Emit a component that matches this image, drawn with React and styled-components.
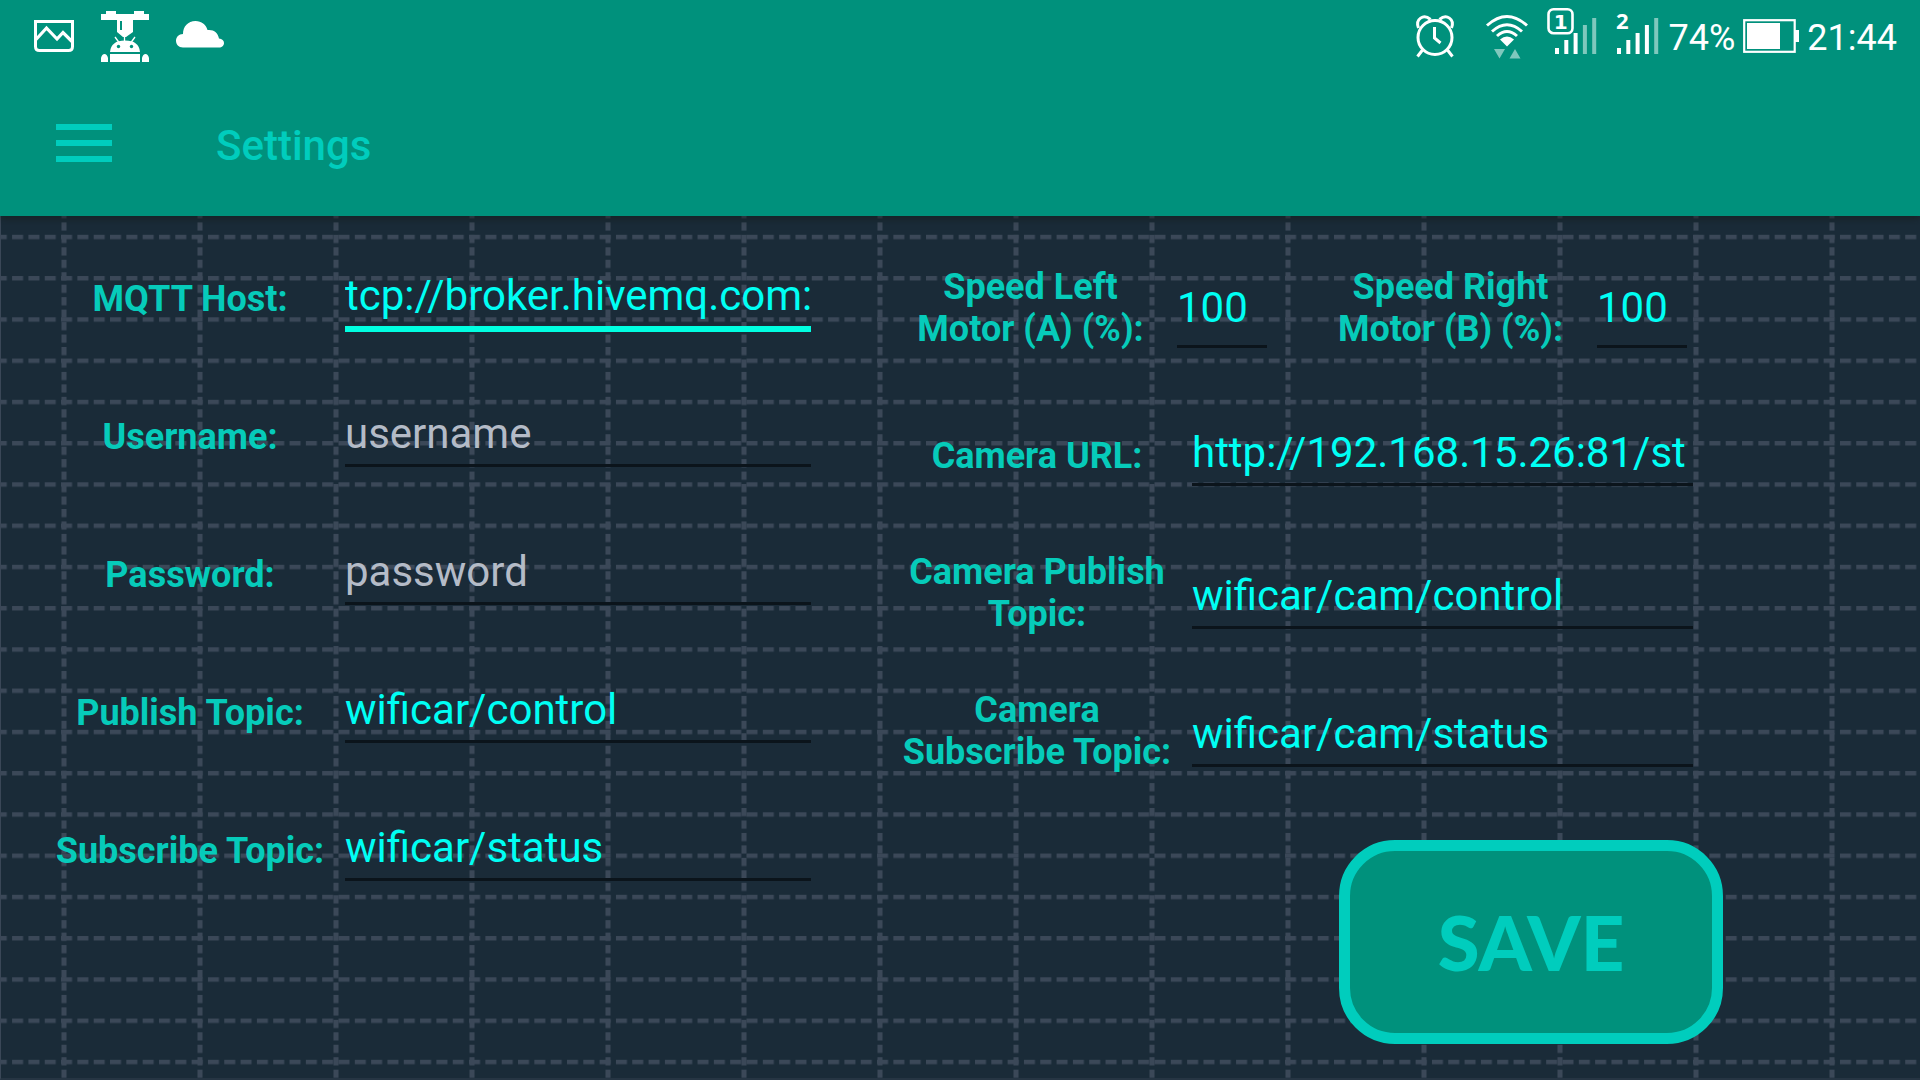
import React from "react";
import styled, { createGlobalStyle, css } from "styled-components";

const color = {
  bar: "#00917c",
  accent: "#00cdbd",
  label: "#06cbba",
  value: "#00fff4",
  hint: "#b4bbc7",
  page: "#1a2b38",
  dash: "#3b4858",
  line: "#0b141b",
};

const GlobalStyle = createGlobalStyle`
  *, *::before, *::after { box-sizing: border-box; }
  body {
    margin: 0;
    background: ${color.page};
    font-family: Roboto, "Noto Sans", sans-serif;
  }
`;

const Screen = styled.div`
  display: flex;
  flex-direction: column;
  min-height: 100vh;
`;

const Header = styled.header`
  position: relative;
  z-index: 1;
  background: ${color.bar};
  box-shadow: 0 2px 8px rgba(16, 24, 16, 0.55);
`;

const StatusBar = styled.div`
  display: flex;
  align-items: center;
  justify-content: space-between;
  height: 72px;
  padding: 0 23px 0 34px;
  color: #fff;
`;

const StatusGroup = styled.div`
  display: flex;
  align-items: center;
  gap: ${(p) => p.$gap}px;

  svg {
    display: block;
    flex: none;
    overflow: visible;
  }
`;

const StatusText = styled.span`
  padding-top: 3px;
  font-size: 36px;
  line-height: 44px;
`;

const Toolbar = styled.div`
  display: flex;
  align-items: center;
  gap: 104px;
  height: 144px;
  padding: 0 56px 2px;
`;

const MenuButton = styled.button`
  display: flex;
  flex-direction: column;
  gap: 10px;
  width: 56px;
  padding: 0;
  border: 0;
  background: none;
`;

const MenuLine = styled.span`
  height: 6px;
  background: ${color.accent};
`;

const Title = styled.h1`
  margin: 0;
  padding-top: 6px;
  color: ${color.accent};
  font-size: 42px;
  font-weight: 500;
  line-height: 50px;
`;

const Body = styled.main`
  position: relative;
  flex: 1;
  border-left: 1px solid #3a4757;
  border-bottom: 2px solid #263543;
`;

const Backdrop = styled.svg`
  position: absolute;
  inset: 0;
  width: 100%;
  height: 100%;
`;

const Form = styled.form`
  position: relative;
  display: grid;
  grid-template-columns: minmax(0, 756fr) minmax(0, 821fr);
  column-gap: 91px;
  align-items: start;
  padding: 14px 197px 0 54px;
`;

const Connection = styled.div`
  display: grid;
  grid-template-columns: minmax(0, 1fr);
  grid-auto-rows: 138px;
`;

const Camera = styled.div`
  display: grid;
  grid-template-columns: minmax(0, 1fr);
  grid-template-rows: 144px 140px 146px 130px auto;
  padding-top: 12px;
`;

const Motors = styled.div`
  display: flex;
  gap: 55px;
`;

const Row = styled.div`
  display: flex;
  align-items: center;
  gap: ${(p) => (p.$compact ? 18 : 20)}px;
  padding-right: ${(p) => (p.$inset ? 30 : 0)}px;
`;

const Label = styled.label`
  flex: none;
  width: ${(p) => (p.$compact ? 257 : 270)}px;
  padding-bottom: ${(p) => (p.$tall ? 12 : 0)}px;
  color: ${color.label};
  font-size: 36px;
  font-weight: 700;
  line-height: 42px;
  text-align: center;
`;

const Input = styled.input`
  flex: ${(p) => (p.$compact ? "none" : "1")};
  width: ${(p) => (p.$compact ? "90px" : "auto")};
  min-width: 0;
  height: ${(p) => (p.$compact ? 68 : 60)}px;
  padding: 2px ${(p) => (p.$inset ? 6 : 0)}px ${(p) => (p.$compact ? 13 : 6)}px 0;
  border: 0;
  border-bottom: 3px solid ${color.line};
  border-radius: 0;
  outline: 0;
  background: none;
  color: ${color.value};
  font-family: inherit;
  font-size: 42px;
  line-height: 50px;

  &::placeholder {
    color: ${color.hint};
    opacity: 1;
  }

  ${(p) =>
    p.$active &&
    css`
      border-color: #00ffe1;
      box-shadow: 0 3px 0 #00ffe1;
    `}
`;

const SaveButton = styled.button`
  justify-self: end;
  width: 384px;
  height: 204px;
  margin-top: 38px;
  border: 11px solid ${color.accent};
  border-radius: 56px;
  background: ${color.bar};
  color: ${color.accent};
  font-family: Lato, sans-serif;
  font-size: 76px;
  font-weight: 900;
  line-height: 80px;
`;

function PictureIcon() {
  return (
    <svg width="40" height="32" viewBox="0 0 40 32" fill="none" stroke="#fff" strokeWidth="3">
      <path d="M1.5 1.5h37v25q0 4-4 4h-29q-4 0-4-4z" />
      <path d="M2 19.500 12.500 8 23 19l6-6.500L38.500 22" strokeWidth="3.200" />
    </svg>
  );
}

function PrinterIcon() {
  return (
    <svg width="48" height="50" viewBox="0 0 48 50" fill="#fff">
      <path d="M5 0h10v3h18V0h10v3h5v6H32v12l-7 5h-3l-6-5V9H0V3h5z" />
      <path d="M19 10v9h2v-9z" fill={color.bar} />
      <path d="M23.500 25v5M14 26l4 5.500M34 26l-4 5.500" stroke="#fff" strokeWidth="1.300" />
      <path d="M9 41q1-11.500 15-11.500T39 41z" />
      <path d="M9 43h30v8H9zM0 51v-4q1-4 3.500-4T7 47v4zM41 51v-4q1-4 3.500-4T48 47v4z" />
      <circle cx="17.500" cy="35.500" r="1.700" fill={color.bar} />
      <circle cx="30.500" cy="35.500" r="1.700" fill={color.bar} />
    </svg>
  );
}

function CloudIcon() {
  return (
    <svg width="48" height="30" viewBox="0 0 48 30" fill="#fff">
      <path d="M7 26.500C2.500 26.500 0 23.500 0 19.800 0 16 2.800 13.200 7 13 7 5.500 12 0 19.500 0c6 0 10.500 3.500 12 9 6-.8 10.500 2.500 11.500 8.500 3 .2 5 2 5 4.500s-2 4.500-5 4.500z" />
    </svg>
  );
}

function AlarmIcon() {
  return (
    <svg width="38" height="43" viewBox="0 0 38 43" fill="none" stroke="#fff" strokeWidth="3">
      <circle cx="19" cy="22.500" r="17" />
      <path d="M2.500 13C-1 4 7.500-1.500 14.500 4.500M35.500 13C39 4 30.500-1.500 23.500 4.500M6.500 35 1.500 41.500M31.500 35l5 6.500" />
      <path d="M18.500 12v11l6 5" />
    </svg>
  );
}

function WifiIcon() {
  return (
    <svg width="42" height="42" viewBox="0 0 42 42" fill="none" stroke="#fff" strokeWidth="3">
      <path d="M1 10.500Q21-7.500 41 10.500M6 16.500q15-13.500 30 0M11 21q10-9 20 0" />
      <path d="M14 24.500q7-6 14 0l-7 7z" fill="#fff" stroke="none" />
      <path d="M8 34h11l-5.500 9.500zM23.500 43.500h11L29 34z" fill="#7fc8bd" stroke="none" />
    </svg>
  );
}

function SignalBars({ x, levels }) {
  return [6, 14, 21, 29, 36].map((h, i) => (
    <rect key={h} x={x + i * 9.300} y={46 - h} width="4" height={h} fill={i < levels ? "#fff" : "#7fc8bd"} />
  ));
}

function SimOneIcon() {
  return (
    <svg width="50" height="56" viewBox="0 0 50 56">
      <SignalBars x={8} levels={3} />
      <rect x="1.500" y="1.200" width="24" height="24" rx="5" fill={color.bar} stroke="#fff" strokeWidth="2.600" />
      <text x="13.800" y="20.500" textAnchor="middle" fill="#fff" fontFamily="DejaVu Sans, sans-serif" fontWeight="700" fontSize="20">
        1
      </text>
    </svg>
  );
}

function SimTwoIcon() {
  return (
    <svg width="45" height="56" viewBox="0 0 45 56">
      <SignalBars x={1} levels={4} />
      <text x="0" y="21" fill="#fff" fontFamily="Noto Sans, sans-serif" fontWeight="700" fontSize="22">
        2
      </text>
    </svg>
  );
}

function BatteryIcon() {
  return (
    <svg width="56" height="34" viewBox="0 0 56 34">
      <rect x="1.200" y="1.200" width="50.500" height="31.600" fill="none" stroke="#fff" strokeWidth="2.200" />
      <path d="M4 4h33v26H4zM52 11h4v12h-4z" fill="#fff" />
    </svg>
  );
}

function DashedGrid() {
  return (
    <Backdrop aria-hidden="true">
      <defs>
        <pattern id="rows" x="337.500" y="18.800" width="16.320" height="41.250" patternUnits="userSpaceOnUse">
          <rect width="11" height="4.400" fill={color.dash} />
        </pattern>
        <pattern id="columns" x="60.500" y="6.400" width="136" height="12.460" patternUnits="userSpaceOnUse">
          <rect width="5" height="8.200" fill={color.dash} />
        </pattern>
      </defs>
      <rect width="100%" height="100%" fill="url(#rows)" />
      <rect width="100%" height="100%" fill="url(#columns)" />
    </Backdrop>
  );
}

function Field({ id, label, tall, compact, inset, ...input }) {
  return (
    <Row $compact={compact} $inset={inset}>
      <Label htmlFor={id} $tall={tall} $compact={compact}>
        {label}
      </Label>
      <Input
        id={id}
        type="text"
        $compact={compact}
        $inset={inset}
        autoComplete="off"
        spellCheck={false}
        {...input}
      />
    </Row>
  );
}

export default function App() {
  return (
    <Screen>
      <GlobalStyle />
      <Header>
        <StatusBar>
          <StatusGroup $gap={27}>
            <PictureIcon />
            <PrinterIcon />
            <CloudIcon />
          </StatusGroup>
          <StatusGroup $gap={8}>
            <StatusGroup $gap={19}>
              <StatusGroup $gap={32}>
                <AlarmIcon />
                <WifiIcon />
              </StatusGroup>
              <SimOneIcon />
              <SimTwoIcon />
            </StatusGroup>
            <StatusText>74%</StatusText>
            <BatteryIcon />
            <StatusText>21:44</StatusText>
          </StatusGroup>
        </StatusBar>
        <Toolbar>
          <MenuButton type="button" aria-label="Menu">
            <MenuLine />
            <MenuLine />
            <MenuLine />
          </MenuButton>
          <Title>Settings</Title>
        </Toolbar>
      </Header>
      <Body>
        <DashedGrid />
        <Form onSubmit={(e) => e.preventDefault()}>
          <Connection>
            <Field id="host" label="MQTT Host:" defaultValue="tcp://broker.hivemq.com:" $active />
            <Field id="username" label="Username:" placeholder="username" />
            <Field id="password" label="Password:" type="password" placeholder="password" />
            <Field id="publish" label="Publish Topic:" defaultValue="wificar/control" />
            <Field id="subscribe" label="Subscribe Topic:" defaultValue="wificar/status" />
          </Connection>
          <Camera>
            <Motors>
              <Field id="left" label="Speed Left Motor (A) (%):" defaultValue="100" compact tall />
              <Field id="right" label="Speed Right Motor (B) (%):" defaultValue="100" compact tall />
            </Motors>
            <Field id="url" label="Camera URL:" defaultValue="http://192.168.15.26:81/stream" inset />
            <Field id="camPublish" label="Camera Publish Topic:" defaultValue="wificar/cam/control" tall inset />
            <Field id="camSubscribe" label="Camera Subscribe Topic:" defaultValue="wificar/cam/status" tall inset />
            <SaveButton type="submit">SAVE</SaveButton>
          </Camera>
        </Form>
      </Body>
    </Screen>
  );
}
